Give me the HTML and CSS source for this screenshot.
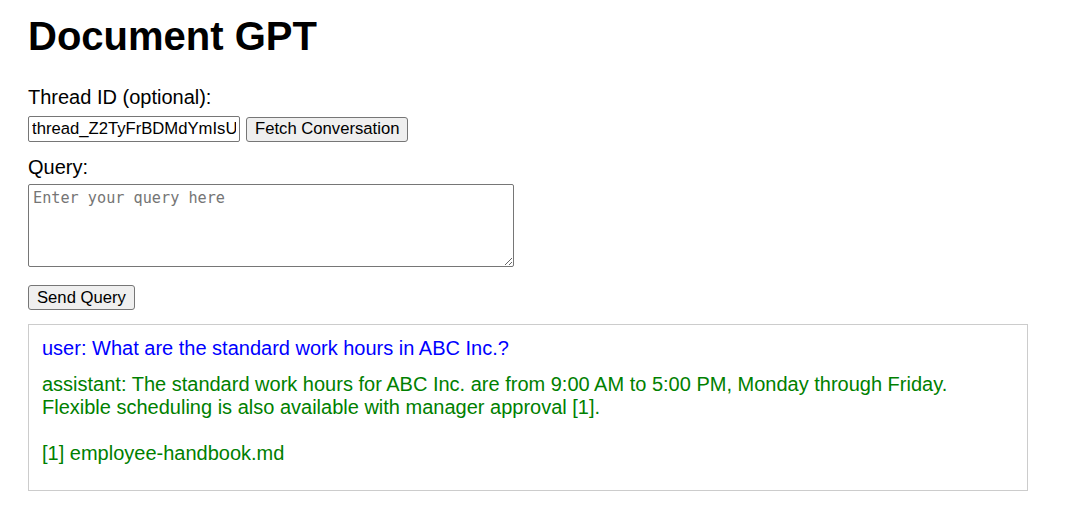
FILE: index.html
```html
<!DOCTYPE html>
<html lang="en">
<head>
<meta charset="utf-8">
<title>Document GPT</title>
<link rel="stylesheet" href="styles.css">
</head>
<body>
<h1 class="title">Document GPT</h1>
<label class="field-label" for="thread">Thread ID (optional):</label>
<div class="thread-row">
  <input id="thread" class="thread-input" type="text" value="thread_Z2TyFrBDMdYmIsUq8xWkL3pN">
  <button class="btn" type="button">Fetch Conversation</button>
</div>
<label class="field-label field-label-tight" for="query">Query:</label>
<textarea id="query" class="query-input" placeholder="Enter your query here"></textarea>
<div class="send-row">
  <button class="btn" type="button">Send Query</button>
</div>
<div class="conversation">
  <div class="msg msg-user">user: What are the standard work hours in ABC Inc.?</div>
  <div class="msg msg-assistant">assistant: The standard work hours for ABC Inc. are from 9:00 AM to 5:00 PM, Monday through Friday. Flexible scheduling is also available with manager approval [1].

[1] employee-handbook.md</div>
</div>
</body>
</html>
```
FILE: styles.css
```css
html, body {
  background: #ffffff;
}
body {
  margin: 0;
  padding: 13px 28px 0 28px;
  font-family: "Liberation Sans", Arial, sans-serif;
  font-size: 20px;
  line-height: 23px;
  color: #000000;
}
.title {
  margin: 0 0 27px 0;
  font-size: 40px;
  line-height: 46px;
  font-weight: bold;
}
.field-label {
  display: block;
  margin-bottom: 7px;
}
.field-label-tight {
  margin-bottom: 5px;
}
.thread-row {
  display: flex;
  align-items: center;
  gap: 6px;
  margin-bottom: 14px;
}
.thread-input {
  box-sizing: border-box;
  width: 212px;
  height: 26px;
  margin: 0;
  padding: 0 3px;
  border: 1px solid #767676;
  border-radius: 2px;
  font-family: "Liberation Sans", Arial, sans-serif;
  font-size: 16.67px;
  color: #000000;
  background: #ffffff;
}
.btn {
  box-sizing: border-box;
  height: 25px;
  margin: 0;
  padding: 0 8px;
  border: 1px solid #767676;
  border-radius: 3px;
  background: #efefef;
  font-family: "Liberation Sans", Arial, sans-serif;
  font-size: 16.67px;
  line-height: 20px;
  color: #000000;
}
.query-input {
  display: block;
  box-sizing: border-box;
  width: 486px;
  height: 83px;
  margin: 0;
  padding: 4px 4px;
  border: 1px solid #767676;
  border-radius: 2px;
  font-family: "DejaVu Sans Mono", "Liberation Mono", monospace;
  font-size: 15.2px;
  line-height: 18px;
  resize: both;
}
.query-input::placeholder {
  color: #757575;
}
.send-row {
  display: flex;
  margin-top: 18px;
  margin-bottom: 14px;
}
.conversation {
  box-sizing: border-box;
  width: 1000px;
  padding: 12px 13px;
  border: 1px solid #cccccc;
}
.msg {
  margin-bottom: 13px;
  white-space: pre-wrap;
}
.msg-user {
  color: #0000ff;
}
.msg-assistant {
  color: #008000;
}
```
